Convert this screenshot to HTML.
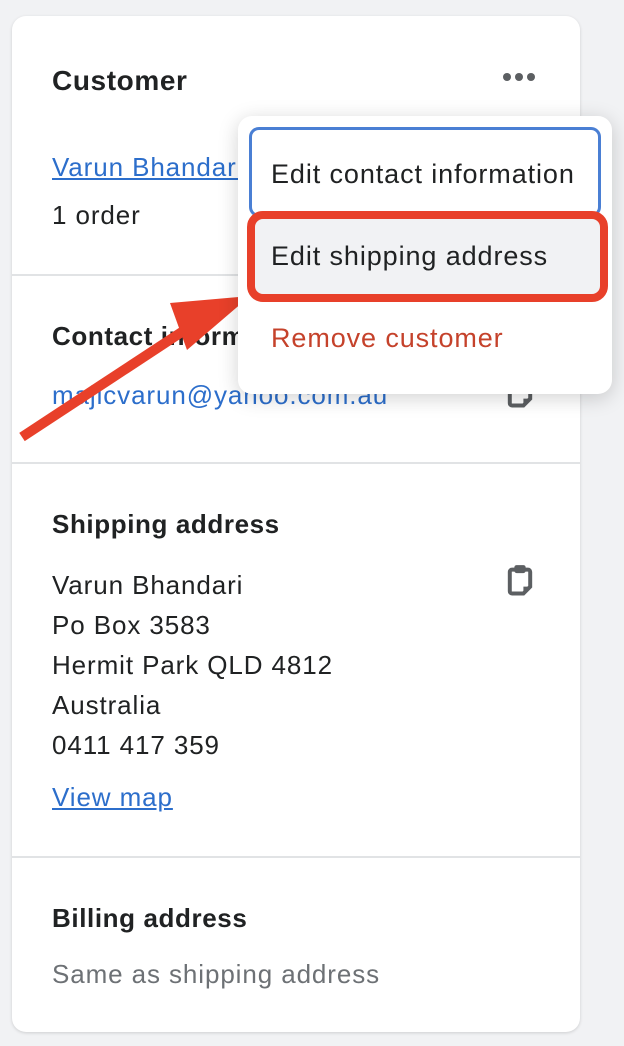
<!DOCTYPE html><html><head><style>
body{margin:0;width:624px;height:1046px;background:#f1f2f4;font-family:"Liberation Sans",sans-serif;position:relative;overflow:hidden;color:#202223}
.card{position:absolute;left:12px;top:16px;width:568px;height:1016px;background:#fff;border-radius:14px;box-shadow:0 1px 3px rgba(0,0,0,.15)}
.t{position:absolute;font-size:26px;letter-spacing:0.9px;white-space:nowrap;line-height:30px}
.b{font-weight:bold;font-size:26px;letter-spacing:0.6px}
.hr{position:absolute;left:0;width:568px;height:2px;background:#e1e3e5}
a{color:#2c6ecb;text-decoration:underline}
.pop{position:absolute;left:238px;top:116px;width:374px;height:278px;background:#fff;border-radius:14px;box-shadow:0 4px 20px rgba(0,0,0,.18)}
.pop .t{font-size:27px;letter-spacing:0.9px}
</style></head><body>
<div class="card">
<div class="t b" style="left:40px;top:50px;font-size:28px">Customer</div>
<div style="position:absolute;left:491px;top:57px;display:flex;gap:4px"><span style="width:8px;height:8px;border-radius:50%;background:#5c5f62"></span><span style="width:8px;height:8px;border-radius:50%;background:#5c5f62"></span><span style="width:8px;height:8px;border-radius:50%;background:#5c5f62"></span></div>
<div class="t" style="left:40px;top:136px"><a>Varun Bhandari</a></div>
<div class="t" style="left:40px;top:184px">1 order</div>
<div class="hr" style="top:258px"></div>
<div class="t b" style="left:40px;top:305px">Contact information</div>
<div class="t" style="left:40px;top:364px;color:#2c6ecb">majicvarun@yahoo.com.au</div>
<div class="hr" style="top:446px"></div>
<div class="t b" style="left:40px;top:493px">Shipping address</div>
<div class="t" style="left:40px;top:549px;line-height:40px">Varun Bhandari<br>Po Box 3583<br>Hermit Park QLD 4812<br>Australia<br>0411 417 359</div>
<svg style="position:absolute;left:492px;top:548px" width="32" height="34" viewBox="0 0 28 30"><path d="M7 5h14a2 2 0 0 1 2 2v13l-6 6H7a2 2 0 0 1-2-2V7a2 2 0 0 1 2-2z" fill="none" stroke="#5c5f62" stroke-width="3.5"/><rect x="9" y="1" width="10" height="7" rx="2" fill="#5c5f62"/><path d="M17 26v-6h6z" fill="#5c5f62"/></svg>
<svg style="position:absolute;left:492px;top:360px" width="32" height="34" viewBox="0 0 28 30"><path d="M7 5h14a2 2 0 0 1 2 2v13l-6 6H7a2 2 0 0 1-2-2V7a2 2 0 0 1 2-2z" fill="none" stroke="#5c5f62" stroke-width="3.5"/><path d="M17 26v-6h6z" fill="#5c5f62"/></svg>
<div class="t" style="left:40px;top:766px"><a>View map</a></div>
<div class="hr" style="top:840px"></div>
<div class="t b" style="left:40px;top:887px">Billing address</div>
<div class="t" style="left:40px;top:943px;color:#6d7175">Same as shipping address</div>
</div>
<svg style="position:absolute;left:0;top:0" width="624" height="1046"><line x1="22" y1="437" x2="200" y2="320" stroke="#e8402a" stroke-width="10"/><polygon points="170,303 250,296 187,350" fill="#e8402a"/></svg>
<div class="pop">
<div style="position:absolute;left:11px;top:11px;width:346px;height:84px;border:3px solid #4a7fd4;border-radius:10px"></div>
<div class="t" style="left:33px;top:43px">Edit contact information</div>
<div style="position:absolute;left:9px;top:95px;border:8px solid #e8402a;border-radius:16px;background:#f1f2f4;box-sizing:border-box;width:361px;height:91px"></div>
<div class="t" style="left:33px;top:125px">Edit shipping address</div>
<div class="t" style="left:33px;top:207px;color:#c5422b">Remove customer</div>
</div>
</body></html>
